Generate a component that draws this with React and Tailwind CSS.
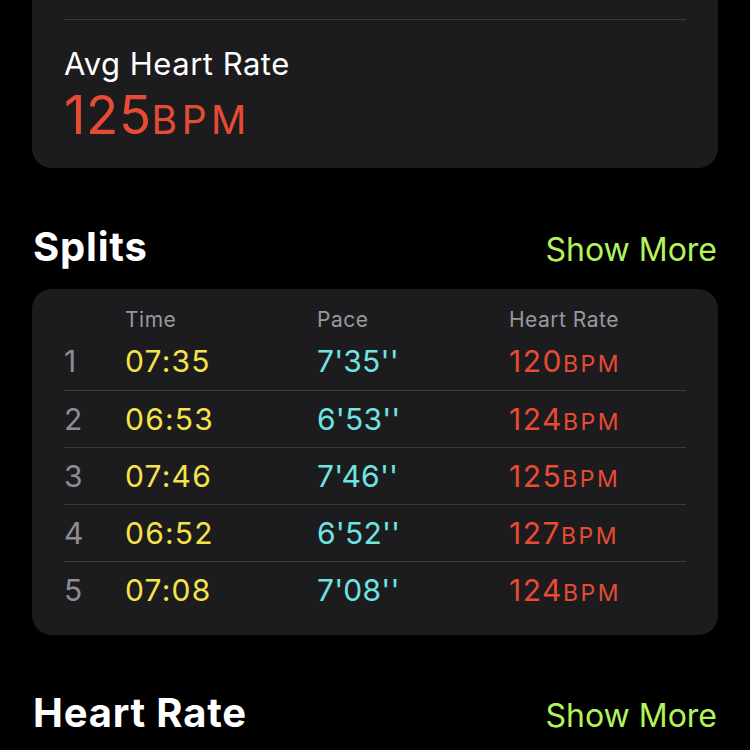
import React from "react"

const splits = [
  { n: 1, time: "07:35", pace: "7'35''", hr: 120 },
  { n: 2, time: "06:53", pace: "6'53''", hr: 124 },
  { n: 3, time: "07:46", pace: "7'46''", hr: 125 },
  { n: 4, time: "06:52", pace: "6'52''", hr: 127 },
  { n: 5, time: "07:08", pace: "7'08''", hr: 124 },
]

function SectionHeader({ title }) {
  return (
    <div className="flex items-baseline justify-between pl-[33px] pr-[33px]">
      <h2 className="text-[40px] leading-[46px] font-bold text-white tracking-[0.8px]">
        {title}
      </h2>
      <span className="text-[32px] leading-[46px] text-[#b4f25b]">
        Show More
      </span>
    </div>
  )
}

export default function App() {
  return (
    <div
      className="w-[750px] h-[750px] overflow-hidden bg-black text-white"
      style={{ fontFamily: "Inter, 'Noto Sans', sans-serif" }}
    >
      {/* Avg heart rate card (top cut off) */}
      <div className="mx-[32px] mt-[-20px] rounded-[20px] bg-[#1c1c1e] px-[32px] pt-[39px] pb-[18px]">
        <div className="h-px bg-[#3a3a3c]" />
        <div className="mt-[27px] text-[31px] leading-[34px] tracking-[0.5px] text-white">
          Avg Heart Rate
        </div>
        <div className="mt-[4px] text-[53px] leading-[60px] tracking-[0.5px] text-[#e84b34]">
          125<span className="text-[39px] tracking-[4.5px]">BPM</span>
        </div>
      </div>

      {/* Splits */}
      <div className="mt-[56px]">
        <SectionHeader title="Splits" />
      </div>

      <div className="mx-[32px] mt-[16px] rounded-[20px] bg-[#1c1c1e] px-[32px] pt-[19px] pb-[17px]">
        <div className="grid grid-cols-[61px_192px_192px_1fr] mb-[1px] text-[21px] leading-[24px] tracking-[0.5px] text-[#98989f]">
          <span />
          <span>Time</span>
          <span>Pace</span>
          <span>Heart Rate</span>
        </div>
        {splits.map((s, i) => (
          <div
            key={s.n}
            className={`grid grid-cols-[61px_192px_192px_1fr] items-center h-[57px] text-[30px] ${
              i > 0 ? "border-t border-[#3a3a3c]" : ""
            }`}
          >
            <span className="text-[#8d8d92]">{s.n}</span>
            <span className="text-[#f6e24b] tracking-[1.2px]">{s.time}</span>
            <span className="text-[#6ee4e3] tracking-[0.2px]">{s.pace}</span>
            <span className="text-[#e84b34] tracking-[1.5px]">
              {s.hr}
              <span className="text-[23px] tracking-[2.5px]">BPM</span>
            </span>
          </div>
        ))}
      </div>

      {/* Heart Rate */}
      <div className="mt-[55px]">
        <SectionHeader title="Heart Rate" />
      </div>
    </div>
  )
}
